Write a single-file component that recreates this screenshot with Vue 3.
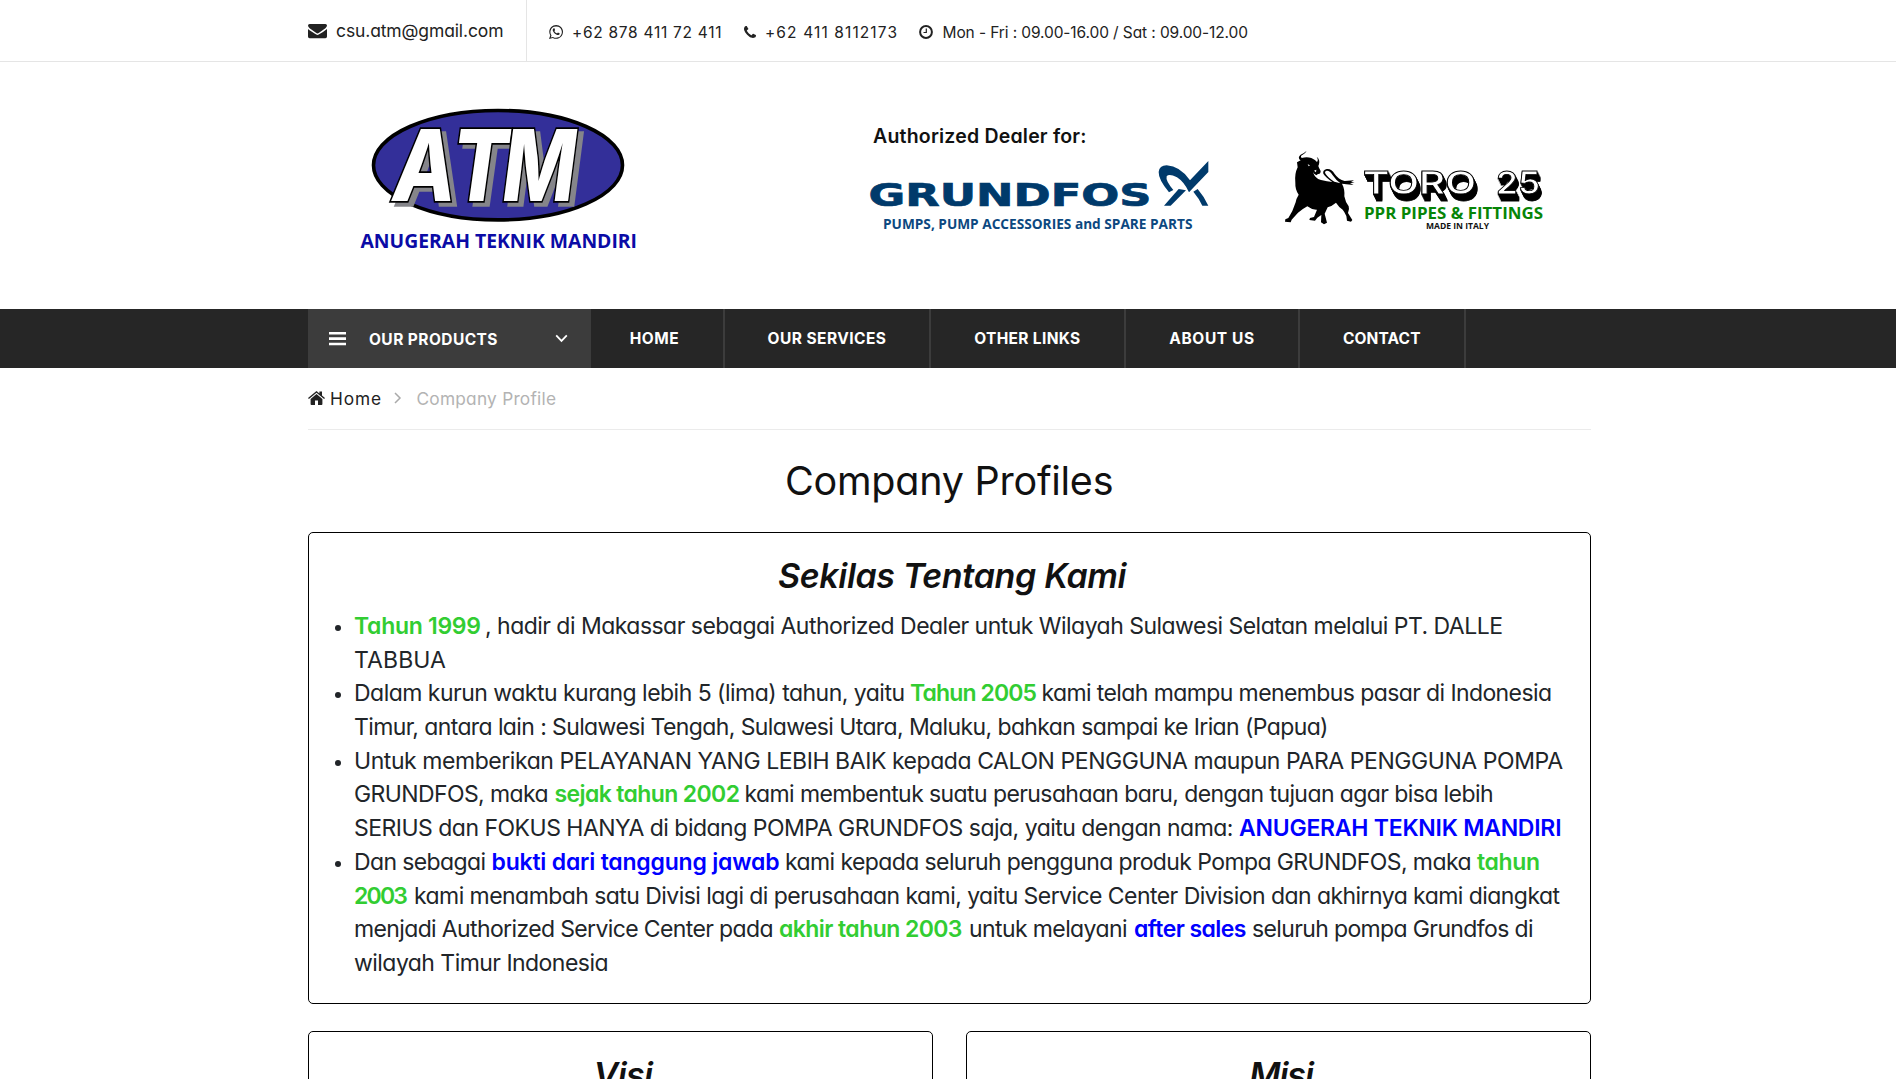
<script setup>
// Stretches or tightens tracking so that a run of text fills a given width.
const vFit = {
  mounted(el, { value }) {
    const natural = el.getBoundingClientRect().width
    const gaps = Math.max(1, el.textContent.length - 1)
    el.style.letterSpacing = (value + 0.5 - natural) / gaps + 'px'
    el.style.width = value + 'px'
  },
}

const menu = [
  { label: 'HOME', cell: 134, text: 47.5 },
  { label: 'OUR SERVICES', cell: 206, text: 117 },
  { label: 'OTHER LINKS', cell: 195, text: 104.5 },
  { label: 'ABOUT US', cell: 174, text: 83.5 },
  { label: 'CONTACT', cell: 166, text: 76 },
]

// Each run: text, left edge, right edge, emphasis.
const items = [
  [
    [['Tahun 1999', 355, 480.5, 'green'], [', hadir di Makassar sebagai Authorized Dealer untuk Wilayah Sulawesi Selatan melalui PT. DALLE', 486, 1502.5]],
    [['TABBUA', 355, 445.5]],
  ],
  [
    [['Dalam kurun waktu kurang lebih 5 (lima) tahun, yaitu', 355, 904.5], ['Tahun 2005', 911, 1036.5, 'green'], ['kami telah mampu menembus pasar di Indonesia', 1042.5, 1551.5]],
    [['Timur, antara lain : Sulawesi Tengah, Sulawesi Utara, Maluku, bahkan sampai ke Irian (Papua)', 355, 1328]],
  ],
  [
    [['Untuk memberikan PELAYANAN YANG LEBIH BAIK kepada CALON PENGGUNA maupun PARA PENGGUNA POMPA', 355, 1562.5]],
    [['GRUNDFOS, maka', 355, 548], ['sejak tahun 2002', 555.5, 739.5, 'green'], ['kami membentuk suatu perusahaan baru, dengan tujuan agar bisa lebih', 745.5, 1493]],
    [['SERIUS dan FOKUS HANYA di bidang POMPA GRUNDFOS saja, yaitu dengan nama:', 355, 1233], ['ANUGERAH TEKNIK MANDIRI', 1240, 1561, 'blue']],
  ],
  [
    [['Dan sebagai', 355, 485.5], ['bukti dari tanggung jawab', 492.5, 779, 'blue'], ['kami kepada seluruh pengguna produk Pompa GRUNDFOS, maka', 786, 1471], ['tahun', 1478, 1539.5, 'green']],
    [['2003', 355, 407.5, 'green'], ['kami menambah satu Divisi lagi di perusahaan kami, yaitu Service Center Division dan akhirnya kami diangkat', 415, 1559.5]],
    [['menjadi Authorized Service Center pada', 355, 773], ['akhir tahun 2003', 780, 962, 'green'], ['untuk melayani', 970, 1127], ['after sales', 1135, 1246, 'blue'], ['seluruh pompa Grundfos di', 1253, 1533]],
    [['wilayah Timur Indonesia', 355, 608]],
  ],
].map((lines) =>
  lines.map((runs) =>
    runs.map(([text, from, to, tone], i) => ({
      text,
      tone,
      width: to - from,
      gap: from - (i ? runs[i - 1][2] : 354),
    }))
  )
)
</script>

<template>
  <div class="page">
    <div class="topbar">
      <div class="wrap top-row">
        <div class="mail">
          <svg class="i-mail" width="19" height="15" viewBox="0 0 19 15"><path d="M0 1.600Q0 0 1.600 0H17.400Q19 0 19 1.600Q19 3 17.400 4.200L11.400 8.400Q10 9.400 9.500 9.400T7.600 8.400L1.600 4.200Q0 3 0 1.600ZM0 4.900Q.5 5.400 6.600 9.600Q8.500 11 9.500 11T12.400 9.600Q18.200 5.600 19 4.900V12.600Q19 14.200 17.400 14.200H1.600Q0 14.200 0 12.600Z" /></svg>
          <span v-fit="166" class="t mail-text">csu.atm@gmail.com</span>
        </div>
        <div class="info">
          <svg class="i-wa" width="14" height="14" viewBox="0 0 1536 1536"><path d="M985 823q13 0 97.500 44t89.500 53q2 5 2 15q0 33-17 76q-16 39-71 65.500t-102 26.500q-57 0-190-62q-98-45-170-118t-148-185q-72-107-71-194v-8q3-91 74-158q24-22 52-22q6 0 18 1.500t19 1.500q19 0 26.500 6.500t15.500 27.500q8 20 33 88t25 75q0 21-34.500 57.500t-34.500 46.500q0 7 5 15q34 73 102 137q56 53 151 101q12 7 22 7q15 0 54-48.500t52-48.500zM782 1407q127 0 243.500-50t200.500-134t134-200.500t50-243.500t-50-243.500t-134-200.500t-200.500-134t-243.500-50t-243.500 50t-200.500 134t-134 200.500t-50 243.500q0 203 120 368l-79 233l242-77q158 104 345 104zM782 0q153 0 292.500 60t240.500 161t161 240.500t60 292.500t-60 292.500t-161 240.500t-240.500 161t-292.500 60q-195 0-365-94l-417 134l136-405q-108-178-108-389q0-153 60-292.500t161-240.500t240.500-161t292.500-60z" /></svg>
          <span v-fit="148" class="t info-text a">+62 878 411 72 411</span>
          <svg class="i-phone" width="12" height="12" viewBox="0 0 1408 1408"><path d="M1408 1112q0 27-10 70.500t-21 68.500q-21 50-122 106q-94 51-186 51q-27 0-53-3.500t-57.500-12.500t-47-14.500t-55.500-20.500t-49-18q-98-35-175-83q-127-79-264-216t-216-264q-48-77-83-175q-3-9-18-49t-20.500-55.500t-14.500-47t-12.500-57.500t-3.500-53q0-92 51-186q56-101 106-122q25-11 68.500-21t70.500-10q14 0 21 3q18 6 53 76q11 19 30 54t35 63.500t31 53.500q3 4 17.500 25t21.500 35.500t7 28.500q0 20-28.500 50t-62 55t-62 53t-28.500 46q0 9 5 22.500t8.500 20.500t14 24t11.500 19q76 137 174 235t235 174q2 1 19 11.500t24 14t20.500 8.500t22.500 5q18 0 46-28.500t53-62t55-62t50-28.500q14 0 28.500 7t35.500 21.500t25 17.500q25 15 53.500 31t63.500 35t54 30q70 35 76 53q3 7 3 21z" /></svg>
          <span v-fit="130.500" class="t info-text b">+62 411 8112173</span>
          <svg class="i-clock" width="14" height="14" viewBox="0 0 14 14"><circle cx="7" cy="7" r="5.900" fill="none" stroke="#222" stroke-width="2" /><path d="M7.300 3.500V7.500H4.500" fill="none" stroke="#222" stroke-width="1.200" /></svg>
          <span v-fit="304" class="t info-text c">Mon - Fri : 09.00-16.00 / Sat : 09.00-12.00</span>
        </div>
      </div>
    </div>

    <header class="wrap brand">
      <svg class="logo" width="320" height="170" viewBox="0 0 320 170">
        <ellipse cx="158" cy="70.200" rx="124.500" ry="54.700" fill="#332f99" stroke="#000" stroke-width="3.600" />
        <g class="atm">
          <text x="53" y="106" textLength="63" lengthAdjust="spacingAndGlyphs">A</text>
          <text x="112" y="106" textLength="56" lengthAdjust="spacingAndGlyphs">T</text>
          <text x="163" y="106" textLength="73" lengthAdjust="spacingAndGlyphs">M</text>
        </g>
        <text class="cal" x="20.500" y="152.700" font-size="18.700" fill="#0b0ba6" textLength="276.500" lengthAdjust="spacingAndGlyphs">ANUGERAH TEKNIK MANDIRI</text>
      </svg>

      <div class="dealer">
        <span v-fit="212" class="t dealer-title">Authorized Dealer for:</span>
        <svg class="grundfos" width="350" height="80" viewBox="0 0 350 80">
          <text class="gf" x="-1.500" y="50" textLength="283" lengthAdjust="spacingAndGlyphs">GRUNDFOS</text>
          <g fill="#003a6b" transform="translate(-20 -46) scale(.33333)">
            <path d="M1075 153V186L1017 247Q1003 216 981 202Q957 190 950 199Q946 212 970 240L957 247Q925 208 926 186Q928 166 950 166Q990 168 1020 211Z" />
            <path d="M986 237L1008 241L962 287H942Z" />
            <path d="M1030 245L1043 237Q1062 259 1075 287H1057Q1047 265 1030 245Z" />
          </g>
          <text class="cal" x="13" y="73.300" font-size="14.200" fill="#0c4880" textLength="309.500" lengthAdjust="spacingAndGlyphs">PUMPS, PUMP ACCESSORIES and SPARE PARTS</text>
        </svg>
      </div>

      <svg class="toro" width="300" height="120" viewBox="0 0 300 120">
        <g transform="scale(.33333)">
          <path d="M110 62Q105 72 97 75Q90 78 95 84Q110 80 124 84Q137 90 141 96Q146 90 140 80Q151 89 147 103Q143 108 147 113L152 123Q152 133 144 132L139 136Q131 132 129 126Q134 145 153 150Q172 155 187 156Q166 141 160 131Q157 120 170 117Q184 115 194 132Q205 148 224 153L252 151L243 156L254 158L240 160L251 165L229 163L216 161Q225 178 223 199Q226 216 236 229Q239 236 234 249L247 270L243 275L231 272L229 258Q224 246 218 239Q207 232 198 218Q185 229 173 232L164 251L171 278L162 283L153 277L154 255L142 263L135 272L118 270L120 264L132 261L141 239Q126 240 112 229Q96 238 84 248L65 269L62 277L45 275L46 268L55 264L67 243L77 217Q78 207 86 194Q75 178 76 158Q73 132 83 112L81 97L92 91Q81 84 92 74Q102 70 110 62ZM170 122Q162 124 167 132Q174 143 193 155L211 160Q199 151 187 134Q179 121 170 122Z" fill="#000" fill-rule="evenodd" />
          <path d="M113 103L120 106L116 109ZM132 122L139 119L138 127Z" fill="#fff" />
        </g>
        <g class="toro-text">
          <text x="93" y="64" textLength="113" lengthAdjust="spacingAndGlyphs">TORO</text>
          <text x="226" y="64" textLength="44" lengthAdjust="spacingAndGlyphs">25</text>
        </g>
        <text class="cal" x="94" y="88.700" font-size="16.200" fill="#078507" textLength="179" lengthAdjust="spacingAndGlyphs">PPR PIPES &amp; FITTINGS</text>
        <text class="cal" x="156" y="98.700" font-size="9" fill="#111" textLength="63" lengthAdjust="spacingAndGlyphs">MADE IN ITALY</text>
      </svg>
    </header>

    <nav class="nav">
      <div class="wrap nav-row">
        <div class="products">
          <svg width="17" height="14" viewBox="0 0 17 14"><path d="M0 0H17V2.600H0ZM0 5.300H17V7.900H0ZM0 10.700H17V13.300H0Z" fill="#fff" /></svg>
          <span v-fit="127" class="t products-text">OUR PRODUCTS</span>
          <svg width="13" height="9" viewBox="0 0 13 9"><path d="M1.200 1.400L6.500 6.900L11.800 1.400" fill="none" stroke="#fff" stroke-width="1.800" /></svg>
        </div>
        <div v-for="m in menu" :key="m.label" class="cell" :style="{ width: m.cell + 'px' }">
          <span v-fit="m.text" class="t">{{ m.label }}</span>
        </div>
      </div>
    </nav>

    <main class="wrap">
      <div class="crumbs">
        <svg width="17" height="14" viewBox="0 0 17 14"><path d="M8.500 3L14.400 7.900V13Q14.400 13.900 13.600 13.900H10V9.500H7V13.900H3.400Q2.600 13.900 2.600 13V7.900ZM8.500 0L11.400 2.400V.6H14V4.500L17 7L16.100 8.100L8.500 1.800L.9 8.100L0 7Z" fill="#222" /></svg>
        <span v-fit="49.500" class="t home">Home</span>
        <svg class="sep" width="8" height="12" viewBox="0 0 8 12"><path d="M1 1L6 6L1 11" fill="none" stroke="#aaa" stroke-width="1.500" /></svg>
        <span v-fit="138" class="t here">Company Profile</span>
      </div>

      <h1><span v-fit="327" class="t">Company Profiles</span></h1>

      <section class="card about">
        <h2><span v-fit="347" class="t">Sekilas Tentang Kami</span></h2>
        <ul>
          <li v-for="(lines, i) in items" :key="i">
            <div v-for="(runs, j) in lines" :key="j" class="line">
              <span v-for="(r, k) in runs" :key="k" v-fit="r.width" class="t" :class="r.tone" :style="{ marginLeft: r.gap + 'px' }">{{ r.text }}</span>
            </div>
          </li>
        </ul>
      </section>

      <div class="pair">
        <section class="card"><h2><span v-fit="58" class="t">Visi</span></h2></section>
        <section class="card"><h2><span v-fit="63" class="t">Misi</span></h2></section>
      </div>
    </main>
  </div>
</template>

<style>
body {
  margin: 0;
  overflow: hidden;
  background: #fff;
}
</style>

<style scoped>
.page {
  height: 1079px;
  overflow: hidden;
  color: #222;
  font-family: Inter, "Open Sans", sans-serif;
  font-weight: 370;
  font-feature-settings: "cv11";
}
.wrap {
  width: 1283px;
  margin-left: 308px;
}
.t {
  display: inline-block;
  flex: none;
  white-space: pre;
  text-indent: -1px;
}
svg {
  display: block;
  flex: none;
  overflow: visible;
}
.topbar {
  height: 61px;
  border-bottom: 1px solid #e5e5e5;
}
.top-row {
  display: flex;
  height: 61px;
}
.mail {
  display: flex;
  width: 218px;
  border-right: 1px solid #e5e5e5;
}
.i-mail {
  margin-top: 24px;
  fill: #222;
}
.mail-text {
  margin: 19px 0 0 10px;
  font-size: 17.5px;
  line-height: 24px;
}
.info {
  display: flex;
  padding-left: 22px;
}
.info-text {
  margin: 21px 0 0;
  font-size: 15.5px;
  line-height: 24px;
}
.i-wa,
.i-phone {
  fill: #222;
}
.i-wa,
.i-clock {
  margin-top: 25px;
}
.i-phone {
  margin: 26px 0 0 23px;
}
.info-text.a,
.info-text.b {
  margin-left: 10px;
}
.i-clock {
  margin-left: 22px;
}
.info-text.c {
  margin-left: 11px;
}
.brand {
  display: flex;
  height: 247px;
}
.logo {
  margin: 33px 0 0 32px;
}
.atm {
  filter: drop-shadow(5px 4px 0 #85858a);
}
.atm text {
  fill: #fff;
  stroke: #000;
  stroke-width: 3.6px;
  paint-order: stroke;
  font: italic 800 99px Inter, sans-serif;
}
.cal {
  font-family: "Open Sans", sans-serif;
  font-weight: 700;
}
.dealer {
  display: flex;
  flex-direction: column;
  align-items: flex-start;
  width: 350px;
  margin-left: 210px;
}
.dealer-title {
  margin: 58px 0 0 4px;
  color: #111;
  font-size: 19.5px;
  font-weight: 600;
  line-height: 32px;
}
.grundfos {
  margin-top: 4px;
}
.gf {
  fill: #003a6b;
  stroke: #003a6b;
  stroke-width: 0.7px;
  font: bold 31.5px "DejaVu Sans", sans-serif;
}
.toro {
  margin: 68px 0 0 50px;
}
.toro-text {
  filter: drop-shadow(0.6px 1px 0 #000) drop-shadow(1.2px 2px 0 #000) drop-shadow(2.4px 4px 0 #000);
}
.toro-text text {
  fill: #fff;
  stroke: #000;
  stroke-width: 0.8px;
  font: 600 31px Inter, sans-serif;
}
.nav {
  height: 59px;
  background: #262626;
}
.nav-row {
  display: flex;
  height: 59px;
  color: #fff;
  font-size: 15.5px;
  font-weight: 700;
}
.products {
  display: flex;
  align-items: center;
  box-sizing: border-box;
  width: 283px;
  padding-left: 21px;
  background: #3c3c3c;
}
.products-text {
  margin: 2px 58px 0 24px;
}
.cell {
  display: flex;
  align-items: center;
  justify-content: center;
  box-sizing: border-box;
  border-right: 2px solid #3c3c3c;
}
.products + .cell {
  padding-right: 5px;
}
.crumbs {
  display: flex;
  align-items: center;
  box-sizing: border-box;
  height: 62px;
  padding-bottom: 1px;
  border-bottom: 1px solid #ebebeb;
  font-size: 17.3px;
}
.home {
  margin-left: 6px;
}
.sep {
  margin-left: 13px;
}
.here {
  margin-left: 16px;
  color: #b3b3b3;
}
h1,
h2 {
  margin: 0;
  color: #111;
  text-align: center;
}
h1 {
  height: 102px;
  font-size: 39.5px;
  font-weight: 370;
  line-height: 103px;
}
.card {
  box-sizing: border-box;
  border: 1px solid #000;
  border-radius: 5px;
}
.about {
  height: 472px;
}
h2 {
  padding: 19px 0 0 6px;
  font-size: 34px;
  font-style: italic;
  font-weight: 600;
  line-height: 48px;
}
ul {
  margin: 10px 0 0;
  padding: 0 0 0 45px;
  list-style: none;
  color: #212529;
  font-size: 23px;
  line-height: 33.7px;
}
li {
  position: relative;
}
li::before {
  content: "";
  position: absolute;
  top: 15px;
  left: -19px;
  width: 6px;
  height: 6px;
  border-radius: 50%;
  background: #212529;
}
.line {
  display: flex;
  height: 33.7px;
}
.green,
.blue {
  font-weight: 600;
}
.green {
  color: #32cd32;
}
.blue {
  color: #00f;
}
.pair {
  display: flex;
  gap: 33px;
  margin-top: 27px;
}
.pair .card {
  width: 625px;
  height: 300px;
}
</style>
